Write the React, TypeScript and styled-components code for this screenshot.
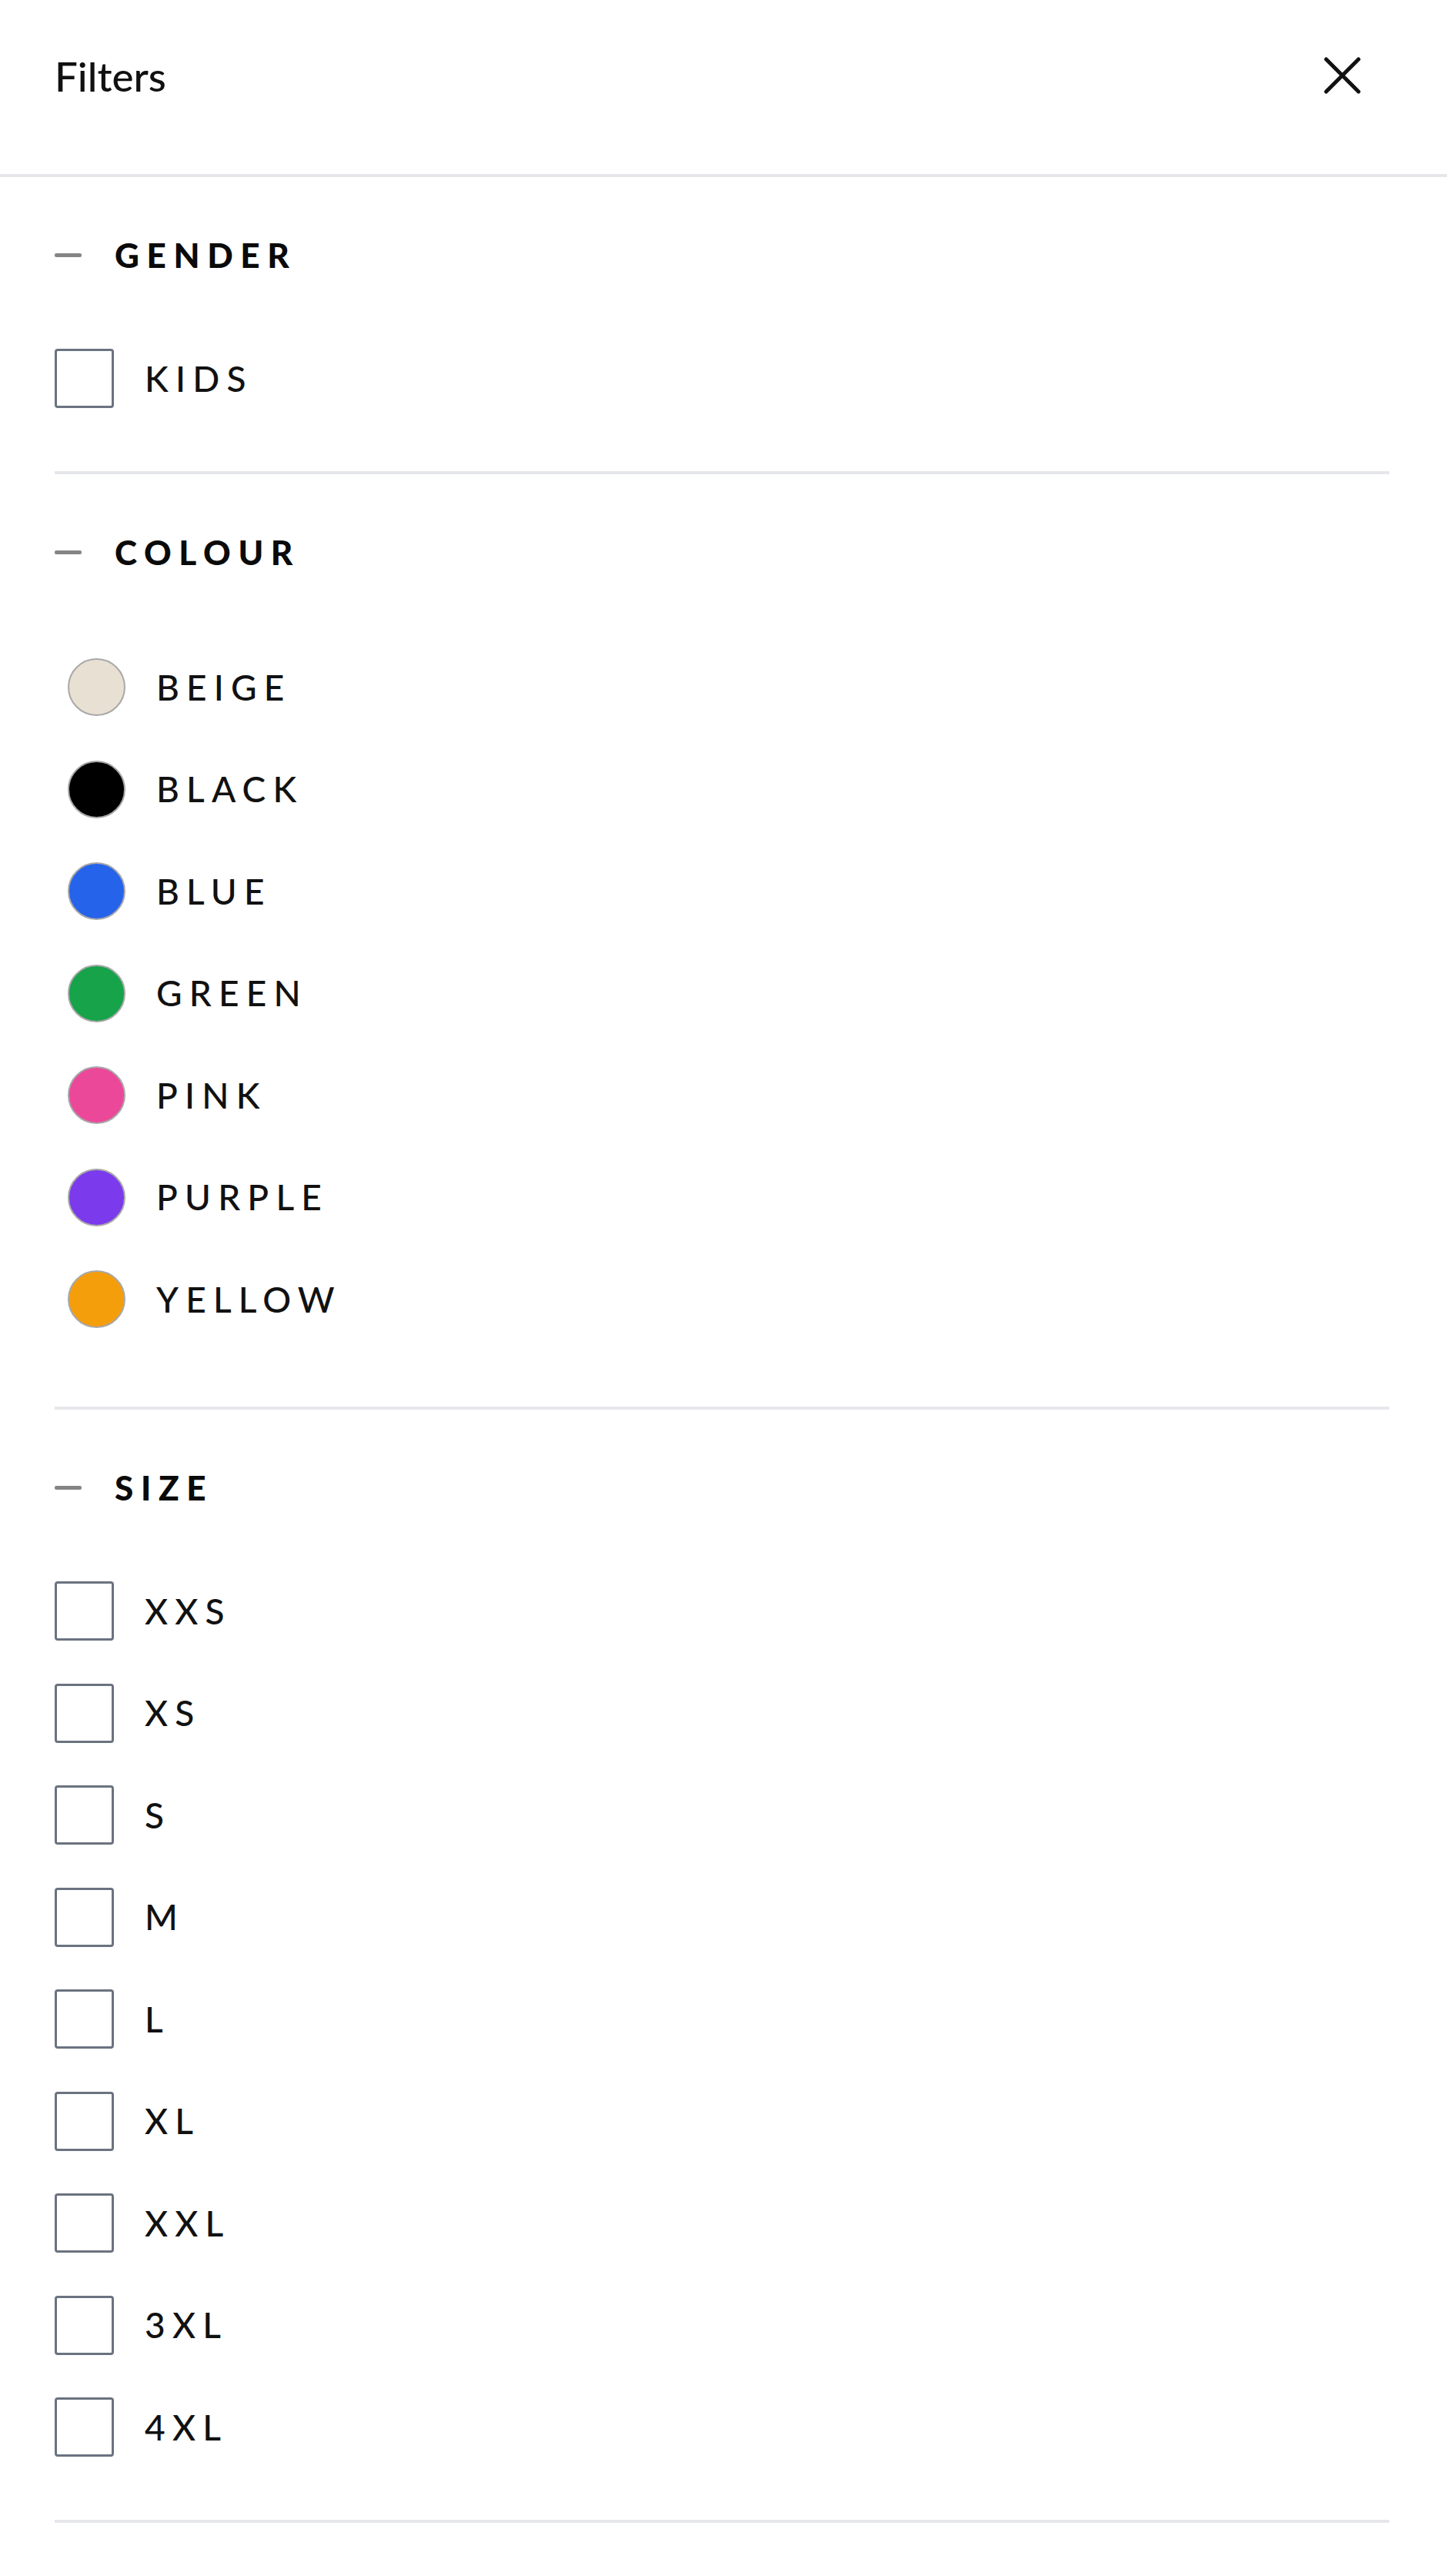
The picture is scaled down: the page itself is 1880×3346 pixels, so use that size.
import styled, { createGlobalStyle } from 'styled-components';

const GlobalStyle = createGlobalStyle`
  body {
    margin: 0;
    background: #ffffff;
    font-family: Lato, "Open Sans", sans-serif;
    color: #111111;
  }
`;

type Swatch = { name: string; color: string };

const COLOURS: Swatch[] = [
  { name: 'BEIGE', color: '#e8e0d2' },
  { name: 'BLACK', color: '#000000' },
  { name: 'BLUE', color: '#2563eb' },
  { name: 'GREEN', color: '#16a34a' },
  { name: 'PINK', color: '#ec4899' },
  { name: 'PURPLE', color: '#7c3aed' },
  { name: 'YELLOW', color: '#f59e0b' },
];

const SIZES = ['XXS', 'XS', 'S', 'M', 'L', 'XL', 'XXL', '3XL', '4XL'];

const CloseIcon = () => (
  <svg width="48" height="48" viewBox="0 0 48 48" fill="none">
    <path d="M3 3L45 45M45 3L3 45" stroke="#111" strokeWidth="5" strokeLinecap="round" />
  </svg>
);

const FilterSection = ({
  title,
  children,
}: {
  title: string;
  children: React.ReactNode;
}) => (
  <Section>
    <SectionHeading>
      <Dash />
      <HeadingText>{title}</HeadingText>
    </SectionHeading>
    {children}
  </Section>
);

export default function App() {
  return (
    <>
      <GlobalStyle />
      <Panel>
        <Header>
          <Title>Filters</Title>
          <CloseButton aria-label="Close filters">
            <CloseIcon />
          </CloseButton>
        </Header>
        <Body>
          <FilterSection title="GENDER">
            <OptionList>
              <OptionRow>
                <Checkbox />
                <OptionLabel>KIDS</OptionLabel>
              </OptionRow>
            </OptionList>
          </FilterSection>

          <FilterSection title="COLOUR">
            <OptionList $swatches>
              {COLOURS.map((c) => (
                <OptionRow key={c.name}>
                  <Dot $color={c.color} />
                  <OptionLabel>{c.name}</OptionLabel>
                </OptionRow>
              ))}
            </OptionList>
          </FilterSection>

          <FilterSection title="SIZE">
            <OptionList>
              {SIZES.map((s) => (
                <OptionRow key={s}>
                  <Checkbox />
                  <OptionLabel>{s}</OptionLabel>
                </OptionRow>
              ))}
            </OptionList>
          </FilterSection>
        </Body>
      </Panel>
    </>
  );
}

const Panel = styled.div`
  width: 1880px;
  min-height: 3346px;
  background: #ffffff;
`;

const Header = styled.header`
  display: flex;
  align-items: center;
  justify-content: space-between;
  height: 196px;
  padding: 0 111px 30px 71px;
  border-bottom: 4px solid #e5e7eb;
`;

const Title = styled.h1`
  margin: 0;
  font-size: 53px;
  font-weight: 500;
  line-height: 1;
  color: #111111;
`;

const CloseButton = styled.button`
  display: flex;
  align-items: center;
  justify-content: center;
  width: 50px;
  height: 50px;
  padding: 0;
  border: none;
  background: none;
  cursor: pointer;
`;

const Body = styled.div`
  padding: 0 75px 0 71px;
`;

const Section = styled.section`
  padding: 78px 0 82px;
  border-bottom: 4px solid #e5e7eb;
`;

const SectionHeading = styled.div`
  display: flex;
  align-items: center;
  gap: 43px;
  height: 46px;
`;

const Dash = styled.span`
  width: 35px;
  height: 5px;
  border-radius: 2px;
  background: #858585;
`;

const HeadingText = styled.h2`
  margin: 0;
  font-size: 44px;
  font-weight: 900;
  letter-spacing: 0.22em;
  line-height: 1;
  color: #0a0a0a;
`;

const OptionList = styled.ul<{ $swatches?: boolean }>`
  display: flex;
  flex-direction: column;
  gap: 55.5px;
  margin: 99px 0 0;
  padding: ${(p) => (p.$swatches ? '15px 0 19px 17px' : '0')};
  list-style: none;
`;

const OptionRow = styled.li`
  display: flex;
  align-items: center;
  gap: 40px;
  height: 77px;
`;

const Checkbox = styled.span`
  box-sizing: border-box;
  width: 77px;
  height: 77px;
  border: 3px solid #6b7280;
  border-radius: 4px;
  background: #ffffff;
  flex-shrink: 0;
`;

const Dot = styled.span<{ $color: string }>`
  box-sizing: border-box;
  width: 75px;
  height: 75px;
  border-radius: 50%;
  border: 2px solid #a8a8a8;
  background: ${(p) => p.$color};
  flex-shrink: 0;
`;

const OptionLabel = styled.span`
  font-size: 46px;
  font-weight: 500;
  letter-spacing: 0.2em;
  line-height: 1;
  color: #111111;
`;
